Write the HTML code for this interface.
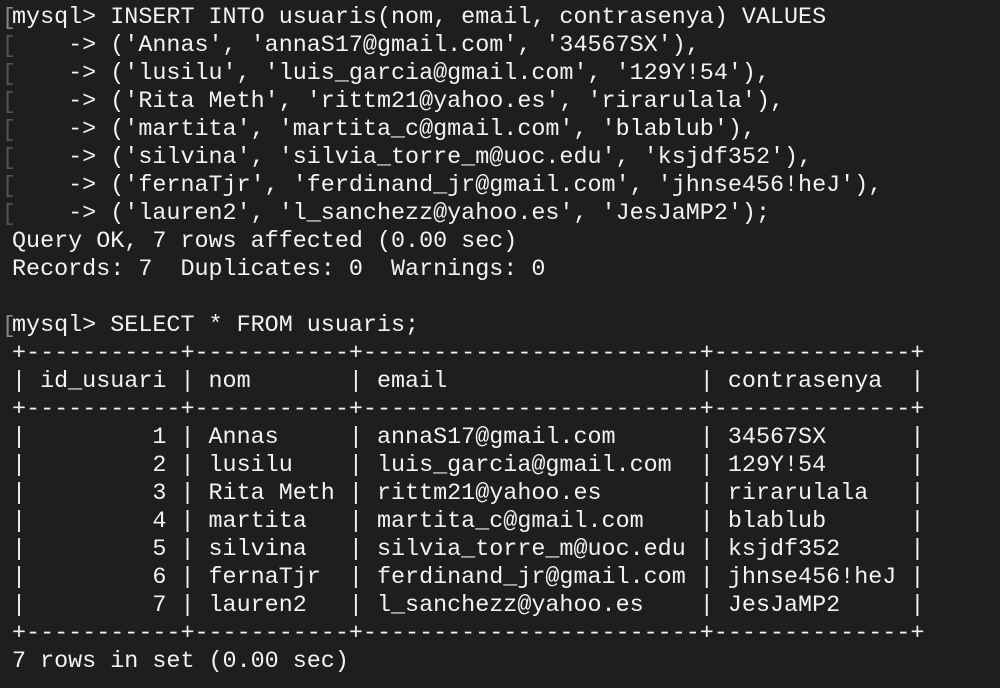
<!DOCTYPE html><html><head><style>
html,body{margin:0;padding:0;background:#1e1e1e;width:1000px;height:688px;overflow:hidden}
pre{margin:0;position:absolute;left:12px;top:4px;font-family:"Liberation Mono",monospace;font-size:23.4px;line-height:28px;color:#f2f2f2;letter-spacing:0}
.b{position:absolute;left:2px;font-family:"Liberation Mono",monospace;font-size:23px;line-height:28px;color:#555;}
</style></head><body>
<div class="b" style="top:4px;color:#888">[</div>
<div class="b" style="top:32px">[</div>
<div class="b" style="top:60px">[</div>
<div class="b" style="top:88px">[</div>
<div class="b" style="top:116px">[</div>
<div class="b" style="top:144px">[</div>
<div class="b" style="top:172px">[</div>
<div class="b" style="top:200px">[</div>
<div class="b" style="top:312px;color:#888">[</div>
<pre>mysql&gt; INSERT INTO usuaris(nom, email, contrasenya) VALUES
    -&gt; ('Annas', 'annaS17@gmail.com', '34567SX'),
    -&gt; ('lusilu', 'luis_garcia@gmail.com', '129Y!54'),
    -&gt; ('Rita Meth', 'rittm21@yahoo.es', 'rirarulala'),
    -&gt; ('martita', 'martita_c@gmail.com', 'blablub'),
    -&gt; ('silvina', 'silvia_torre_m@uoc.edu', 'ksjdf352'),
    -&gt; ('fernaTjr', 'ferdinand_jr@gmail.com', 'jhnse456!heJ'),
    -&gt; ('lauren2', 'l_sanchezz@yahoo.es', 'JesJaMP2');
Query OK, 7 rows affected (0.00 sec)
Records: 7  Duplicates: 0  Warnings: 0

mysql&gt; SELECT * FROM usuaris;
+-----------+-----------+------------------------+--------------+
| id_usuari | nom       | email                  | contrasenya  |
+-----------+-----------+------------------------+--------------+
|         1 | Annas     | annaS17@gmail.com      | 34567SX      |
|         2 | lusilu    | luis_garcia@gmail.com  | 129Y!54      |
|         3 | Rita Meth | rittm21@yahoo.es       | rirarulala   |
|         4 | martita   | martita_c@gmail.com    | blablub      |
|         5 | silvina   | silvia_torre_m@uoc.edu | ksjdf352     |
|         6 | fernaTjr  | ferdinand_jr@gmail.com | jhnse456!heJ |
|         7 | lauren2   | l_sanchezz@yahoo.es    | JesJaMP2     |
+-----------+-----------+------------------------+--------------+
7 rows in set (0.00 sec)</pre>
</body></html>
